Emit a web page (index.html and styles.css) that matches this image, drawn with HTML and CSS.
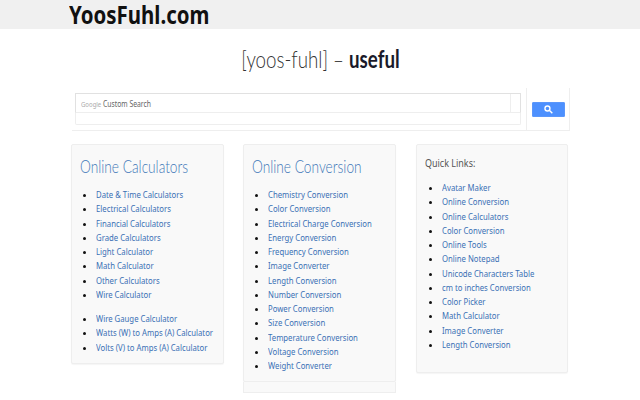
FILE: index.html
```html
<!DOCTYPE html>
<html lang="en">
<head>
<meta charset="utf-8">
<title>YoosFuhl.com</title>
<link rel="stylesheet" href="styles.css">
</head>
<body>
<header class="topbar"><a class="logo">YoosFuhl.com</a></header>
<h1 class="tagline"><span class="tagline-text"><span class="thin">[yoos-fuhl] – </span><strong>useful</strong></span></h1>
<section class="search">
  <div class="search-left">
    <div class="search-box">
      <div class="search-input">
        <div class="search-field"><span class="search-text"><span class="google">Google</span> Custom Search</span></div>
        <div class="search-clear"></div>
      </div>
      <div class="search-under"></div>
    </div>
  </div>
  <div class="search-right">
    <button class="search-btn" aria-label="Search">
      <svg width="9" height="9" viewBox="0 0 13 13"><circle cx="5" cy="5" r="3.6" fill="none" stroke="#fff" stroke-width="2"/><path d="M8 8l4 4" stroke="#fff" stroke-width="2"/></svg>
    </button>
  </div>
</section>
<main class="columns">
  <div class="col">
    <div class="well">
      <h2 class="well-title"><span>Online Calculators</span></h2>
      <ul class="links">
        <li><a>Date &amp; Time Calculators</a></li>
        <li><a>Electrical Calculators</a></li>
        <li><a>Financial Calculators</a></li>
        <li><a>Grade Calculators</a></li>
        <li><a>Light Calculator</a></li>
        <li><a>Math Calculator</a></li>
        <li><a>Other Calculators</a></li>
        <li><a>Wire Calculator</a></li>
      </ul>
      <ul class="links second">
        <li><a>Wire Gauge Calculator</a></li>
        <li><a>Watts (W) to Amps (A) Calculator</a></li>
        <li><a>Volts (V) to Amps (A) Calculator</a></li>
      </ul>
    </div>
  </div>
  <div class="col">
    <div class="well">
      <h2 class="well-title"><span>Online Conversion</span></h2>
      <ul class="links">
        <li><a>Chemistry Conversion</a></li>
        <li><a>Color Conversion</a></li>
        <li><a>Electrical Charge Conversion</a></li>
        <li><a>Energy Conversion</a></li>
        <li><a>Frequency Conversion</a></li>
        <li><a>Image Converter</a></li>
        <li><a>Length Conversion</a></li>
        <li><a>Number Conversion</a></li>
        <li><a>Power Conversion</a></li>
        <li><a>Size Conversion</a></li>
        <li><a>Temperature Conversion</a></li>
        <li><a>Voltage Conversion</a></li>
        <li><a>Weight Converter</a></li>
      </ul>
    </div>
    <div class="well-empty"></div>
  </div>
  <div class="col">
    <div class="well quick">
      <h3 class="quick-title"><span>Quick Links:</span></h3>
      <ul class="links quick-links">
        <li><a>Avatar Maker</a></li>
        <li><a>Online Conversion</a></li>
        <li><a>Online Calculators</a></li>
        <li><a>Color Conversion</a></li>
        <li><a>Online Tools</a></li>
        <li><a>Online Notepad</a></li>
        <li><a>Unicode Characters Table</a></li>
        <li><a>cm to inches Conversion</a></li>
        <li><a>Color Picker</a></li>
        <li><a>Math Calculator</a></li>
        <li><a>Image Converter</a></li>
        <li><a>Length Conversion</a></li>
      </ul>
    </div>
  </div>
</main>
</body>
</html>
```
FILE: styles.css
```css
* { box-sizing: border-box; }
html, body { margin: 0; padding: 0; height: 400px; overflow: hidden; }
body { font-family: "Noto Sans", "Open Sans", sans-serif; background: #fff; color: #333; }

.topbar { height: 29px; background: #f0f0f0; padding-left: 69px; }
.logo { display: inline-block; font-size: 24.5px; line-height: 29px; font-weight: 700; color: #111; white-space: nowrap; transform: scaleX(.834); transform-origin: left center; }

.tagline { margin: 15px 0 0; height: 31px; font-family: Lato, sans-serif; font-size: 24px; line-height: 29px; font-weight: 400; text-align: center; color: #222; }
.tagline-text { display: inline-block; white-space: nowrap; transform: scaleX(.78); }
.thin { font-weight: 300; color: #333; }
.tagline strong { font-weight: 700; color: #1a1a2a; }

.search { display: flex; width: 498px; height: 43px; margin: 13px 0 0 72px; border-bottom: 1px solid #eee; }
.search-left { flex: 0 0 455px; padding: 5px 5px 4px 3px; border-right: 1px solid #eee; }
.search-box { height: 33px; }
.search-input { display: flex; height: 20px; border: 1px solid #e1e1e1; border-bottom: 1px solid #eee; }
.search-field { flex: 1; padding-left: 5px; font-size: 8.5px; line-height: 19px; color: #666; }
.search-text { display: inline-block; white-space: nowrap; transform: scaleX(.8); transform-origin: left center; }
.google { font-size: 7.5px; color: #aaa; }
.search-clear { width: 10px; border-left: 1px solid #eee; }
.search-under { height: 12px; border: 1px solid #eee; border-top: 0; border-radius: 0 0 2px 2px; }
.search-right { flex: 1; display: flex; justify-content: center; padding-top: 14px; border-right: 1px solid #eee; }
.search-btn { display: flex; align-items: center; justify-content: center; width: 33px; height: 15px; padding: 0; background: #4d90fe; border: 1px solid #5b97fb; border-radius: 1px; }

.columns { display: grid; grid-template-columns: repeat(3, 152.7px); column-gap: 19.6px; margin: 13px 0 0 71px; align-items: start; }
.well { background: #f9f9f9; border: 1px solid #eee; border-radius: 2px; padding: 10px 8px 0; box-shadow: 0 1px 1px rgba(0,0,0,.04); }
.col:nth-child(1) .well { height: 220px; }
.col:nth-child(2) .well { height: 238px; }
.quick { height: 229px; }
.well-empty { height: 11px; background: #f9f9f9; border: 1px solid #eee; border-top: 0; }

.well-title { margin: 0 0 9px; font-family: Lato, sans-serif; font-size: 17px; line-height: 24px; font-weight: 300; color: #3f78b8; }
.well-title span { display: inline-block; white-space: nowrap; transform: scaleX(.806); transform-origin: left center; }
.quick-title { margin: -1px 0 9px; font-size: 11.5px; line-height: 18px; font-weight: 400; color: #555; }
.quick-title span { display: inline-block; white-space: nowrap; transform: scaleX(.78); transform-origin: left center; }

.links { list-style: disc; margin: 0; padding: 0 0 0 16px; font-size: 9.8px; line-height: 14.25px; color: #111; }
.quick-links { padding-left: 17px; }
.links a { display: inline-block; white-space: nowrap; color: #3a70b5; transform: scaleX(.79); transform-origin: left center; }
.second { margin-top: 10px; }
```
